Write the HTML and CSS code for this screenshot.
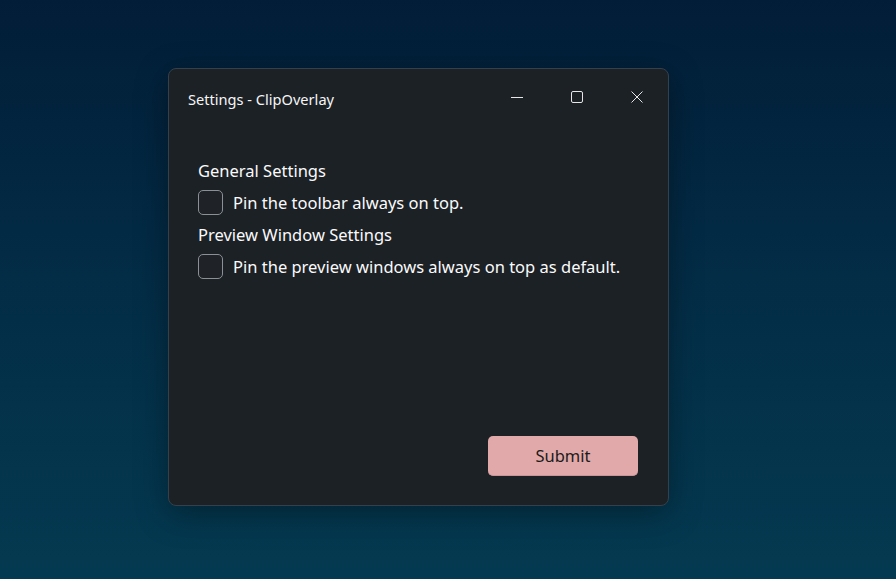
FILE: index.html
```html
<!DOCTYPE html>
<html>
<head>
<meta charset="utf-8">
<link rel="stylesheet" href="styles.css">
</head>
<body>
<div class="window">
  <div class="titlebar">
    <div class="title">Settings - ClipOverlay</div>
    <div class="caption">
      <div class="cbtn"><svg width="14" height="14" viewBox="0 0 14 14"><path d="M1 7.5h12" stroke="#e6e6e6" stroke-width="1"/></svg></div>
      <div class="cbtn"><svg width="14" height="14" viewBox="0 0 14 14"><rect x="1.5" y="1.5" width="11" height="11" rx="1.5" fill="none" stroke="#e6e6e6" stroke-width="1"/></svg></div>
      <div class="cbtn"><svg width="14" height="14" viewBox="0 0 14 14"><path d="M1.5 1.5l11 11M12.5 1.5l-11 11" stroke="#e6e6e6" stroke-width="1"/></svg></div>
    </div>
  </div>
  <div class="content">
    <div class="heading">General Settings</div>
    <label class="row"><span class="box"></span><span>Pin the toolbar always on top.</span></label>
    <div class="heading second">Preview Window Settings</div>
    <label class="row"><span class="box"></span><span>Pin the preview windows always on top as default.</span></label>
  </div>
  <div class="footer">
    <button class="submit">Submit</button>
  </div>
</div>
</body>
</html>
```
FILE: styles.css
```css
html, body {
  margin: 0;
  height: 100%;
}
body {
  background: linear-gradient(180deg, #021d37 0%, #032a44 40%, #043a51 100%);
  font-family: "Noto Sans", "Open Sans", sans-serif;
  color: #ffffff;
  padding: 68px 0 0 168px;
  box-sizing: border-box;
  overflow: hidden;
}
.window {
  width: 501px;
  height: 438px;
  box-sizing: border-box;
  background: #1c2126;
  border: 1px solid #34404b;
  border-radius: 8px;
  box-shadow: 0 8px 32px rgba(0, 0, 0, 0.35);
  display: flex;
  flex-direction: column;
}
.titlebar {
  height: 60px;
  display: flex;
  align-items: center;
  justify-content: space-between;
  padding-left: 19px;
}
.title {
  font-size: 14.6px;
  color: #f5f5f5;
}
.caption {
  display: flex;
  align-self: stretch;
  align-items: center;
  padding-bottom: 5px;
  margin-right: 1px;
}
.cbtn {
  width: 60px;
  height: 30px;
  display: flex;
  align-items: center;
  justify-content: center;
}
.cbtn svg { display: block; }
.content {
  flex: 1;
  padding: 30px 29px 0 29px;
  display: flex;
  flex-direction: column;
  align-items: flex-start;
}
.heading {
  font-size: 16.5px;
  line-height: 24px;
  color: #fafafa;
}
.heading.second { margin-top: 5px; }
.row {
  margin-top: 3px;
  height: 32px;
  display: flex;
  align-items: center;
  gap: 10px;
  font-size: 16.5px;
  color: #fafafa;
}
.box {
  width: 23px;
  height: 23px;
  border: 1px solid #8b9096;
  border-radius: 5px;
  background: #1f2328;
  flex: none;
}
.footer {
  display: flex;
  justify-content: flex-end;
  padding: 0 30px 29px 0;
}
.submit {
  width: 150px;
  height: 40px;
  border: none;
  border-radius: 5px;
  background: #e1a9aa;
  color: #1b1b1b;
  font-family: inherit;
  font-size: 16.5px;
  padding: 0;
  border-bottom: 1px solid #c99596;
}
```
